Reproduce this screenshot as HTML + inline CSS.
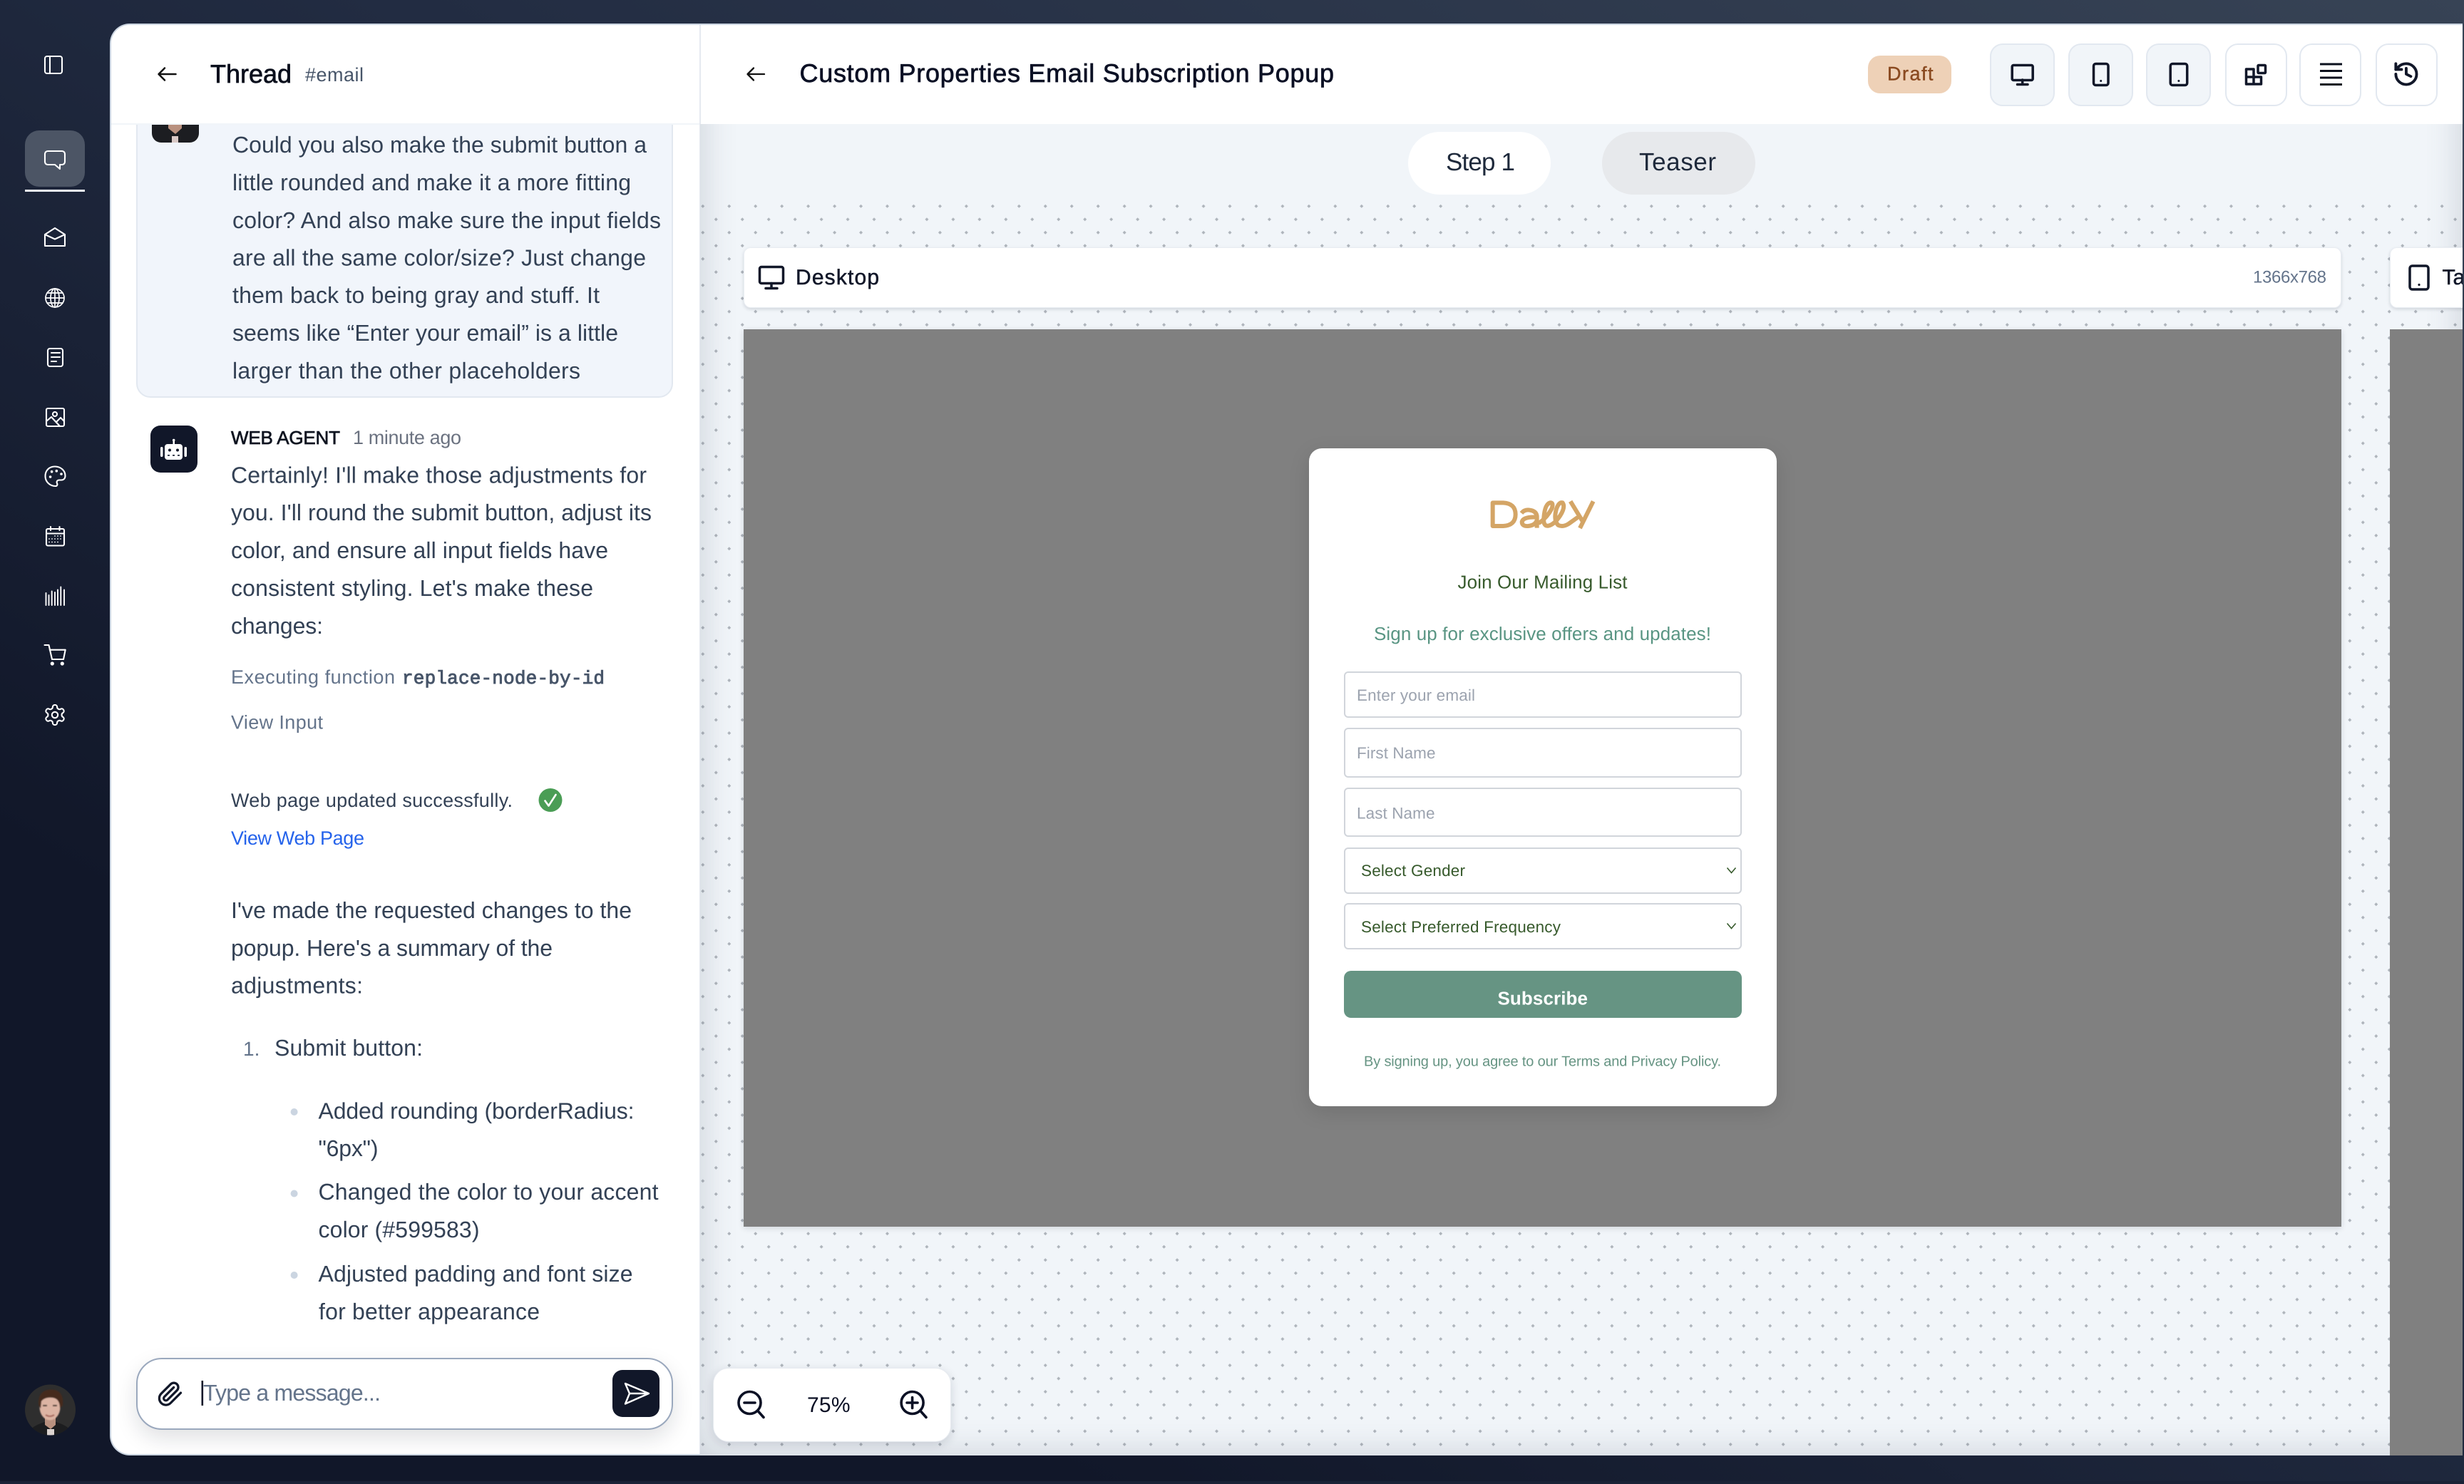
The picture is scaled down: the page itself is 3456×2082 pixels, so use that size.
<!DOCTYPE html>
<html lang="en"><head><meta charset="utf-8"><title>Thread</title>
<style>
html,body{margin:0;padding:0;width:3456px;height:2078px;overflow:hidden;background:#1a2236}
*{box-sizing:border-box}
.a{position:absolute}
#bg{left:0;top:0;width:3456px;height:2078px;background:linear-gradient(to bottom left,#374355 0%,#222c42 42%,#111729 78%,#111729 100%)}
#panel{left:154px;top:33px;width:3300px;height:2009px;background:#fff;border:2px solid #cbd5e1;border-right:0;border-radius:28px 0 0 28px;overflow:hidden}
#clip{left:0;top:0;width:3456px;height:2078px;clip-path:inset(174px 2px 36px 982px)}
svg{position:absolute;left:0;top:0;overflow:visible}
text{font-family:"Liberation Sans",sans-serif;text-rendering:geometricPrecision;white-space:pre}
.b{font-size:32px;fill:#334155}
.s{font-size:27px}
.m{stroke-width:.7px;paint-order:stroke}
.p{font-size:22.5px}
.i{fill:none;stroke:#fff;stroke-width:2.1;stroke-linecap:round;stroke-linejoin:round}
.h{fill:none;stroke:#111729;stroke-width:3.5;stroke-linecap:round;stroke-linejoin:round}
.fi{border:2px solid #d1d5db;border-radius:6px;background:#fff;left:1885px;width:558px}
.hb{top:61px;height:88px;border-radius:18px;border:2.5px solid #e2e8f0}
</style></head><body>
<div class="a" id="bg"></div>
<div class="a" id="panel"></div>

<!-- left panel separators & cards -->
<div class="a" style="left:191px;top:120px;width:753px;height:438px;background:#f1f5fb;border:2px solid #e2e8f0;border-radius:20px"></div>
<div class="a" style="left:156px;top:35px;width:825px;height:140px;background:#fff;border-bottom:2px solid #f1f5f9;border-radius:26px 0 0 0"></div>
<div class="a" style="left:981px;top:35px;width:2px;height:2005px;background:#e5e9f0"></div>
<div class="a" style="left:211px;top:597px;width:66px;height:66px;border-radius:14px;background:#111729"></div>
<div class="a" style="left:191px;top:1905px;width:753px;height:101px;background:#fff;border:2.5px solid #9aa8bd;border-radius:36px;box-shadow:0 12px 30px rgba(15,23,42,.13)"></div>
<div class="a" style="left:859px;top:1922px;width:66px;height:66px;border-radius:14px;background:#111729"></div>
<div class="a" style="left:35px;top:183px;width:84px;height:79px;border-radius:20px;background:#4c5565"></div>
<div class="a" style="left:35px;top:266px;width:84px;height:3px;background:#f1f5f9"></div>

<!-- right canvas -->
<div class="a" id="clip">
  <div class="a" style="left:982px;top:174px;width:2472px;height:1868px;background:#f1f5f9"></div>
  <svg width="3456" height="2078" viewBox="0 0 3456 2078">
    <defs><pattern id="d" x="976.56" y="280.06" width="36.96" height="36.96" patternUnits="userSpaceOnUse">
      <path d="M6.74 9.24L9.24 6.74L11.74 9.24L9.24 11.74ZM25.22 27.72L27.72 25.22L30.22 27.72L27.72 30.22Z" fill="#aeb4bb"/>
    </pattern></defs>
    <rect x="982" y="282" width="2472" height="1760" fill="url(#d)"/>
  </svg>
  <div class="a" style="left:982px;top:54px;width:2472px;height:1988px;box-shadow:inset 0 0 50px rgba(71,85,105,.24)"></div>

  <div class="a" style="left:1975px;top:185px;width:200px;height:88px;border-radius:44px;background:#fff"></div>
  <div class="a" style="left:2247px;top:185px;width:215px;height:88px;border-radius:44px;background:#e7e9ec"></div>

  <div class="a" style="left:1043px;top:347px;width:2241px;height:85px;background:#fff;border:1.5px solid #eaeef3;border-radius:10px;box-shadow:0 2px 5px rgba(15,23,42,.14)"></div>
  <div class="a" style="left:3352px;top:347px;width:400px;height:85px;background:#fff;border:1.5px solid #eaeef3;border-radius:10px;box-shadow:0 2px 5px rgba(15,23,42,.14)"></div>
  <div class="a" style="left:1043px;top:462px;width:2241px;height:1259px;background:#808080;box-shadow:0 2px 8px rgba(15,23,42,.14)"></div>
  <div class="a" style="left:3352px;top:462px;width:400px;height:1620px;background:#808080"></div>

  <div class="a" style="left:1836px;top:629px;width:656px;height:923px;background:#fff;border-radius:18px;box-shadow:0 8px 30px rgba(0,0,0,.12)"></div>
  <div class="a fi" style="top:942px;height:65px"></div>
  <div class="a fi" style="top:1021px;height:70px"></div>
  <div class="a fi" style="top:1105px;height:69px"></div>
  <div class="a fi" style="top:1189px;height:65px"></div>
  <div class="a fi" style="top:1267px;height:65px"></div>
  <div class="a" style="left:1885px;top:1362px;width:558px;height:66px;background:#669483;border-radius:10px"></div>

  <div class="a" style="left:1000px;top:1919px;width:334px;height:104px;background:#fff;border:1.5px solid #e7ebf0;border-radius:22px;box-shadow:0 4px 14px rgba(15,23,42,.14)"></div>
</div>

<!-- header right -->
<div class="a" style="left:2620px;top:78px;width:117px;height:53px;border-radius:17px;background:#eed1b7"></div>
<div class="a hb" style="left:2791px;width:91px;background:#f1f5f9"></div>
<div class="a hb" style="left:2901px;width:91px;background:#f1f5f9"></div>
<div class="a hb" style="left:3010px;width:91px;background:#f1f5f9"></div>
<div class="a hb" style="left:3121px;width:87px;background:#fff"></div>
<div class="a hb" style="left:3225px;width:87px;background:#fff"></div>
<div class="a hb" style="left:3332px;width:87px;background:#fff"></div>

<svg width="3456" height="2078" viewBox="0 0 3456 2078">
<defs>
<clipPath id="av1"><circle cx="70.5" cy="1978" r="35.5"/></clipPath>
<clipPath id="av2"><path d="M213 175H279V187a13 13 0 0 1-13 13H226a13 13 0 0 1-13-13Z"/></clipPath>
<clipPath id="tb"><rect x="3340" y="340" width="114" height="100"/></clipPath>
<filter id="bl"><feGaussianBlur stdDeviation=".7"/></filter>
</defs>

<!-- sidebar icons -->
<g class="i">
<rect x="63" y="79" width="24" height="24" rx="3"/><path d="M70 79V103"/>
<path d="M67 212H87a4 4 0 0 1 4 4V227a4 4 0 0 1-4 4H84V237L77 231H67a4 4 0 0 1-4-4V216a4 4 0 0 1 4-4Z"/>
<path d="M63 345V329L77 320L91 329V345ZM63 329L77 335.5L91 329"/>
<g stroke-width="1.7"><circle cx="77" cy="418" r="13"/><ellipse cx="77" cy="418" rx="6" ry="13"/><path d="M77 405V431M64 418H90M66 411H88M66 425H88"/></g>
<rect x="67" y="489" width="21" height="25" rx="3"/><path d="M72 495H84M72 501H84M72 507H79"/>
<rect x="65" y="573" width="25" height="25" rx="2"/><circle cx="77" cy="581" r="3"/><path d="M65 591L72 585L84 598M79 592L85 586L90 591"/>
<path d="M77 654.5C69 654.5 63.5 660 63.5 668C63.5 676 70 682 78 682C80 682 81 680 80 678C79 676 80 673.5 83 673.5H86C89.5 673.5 91.5 671 91.5 667.5C91.5 660 85 654.5 77 654.5Z"/>
<rect x="65" y="742" width="25" height="23.5" rx="2"/><path d="M71 739V744M83.5 739V744M65 748.5H90"/>
<path d="M64.5 832V849M68.5 835V849M72.7 829.5V849M77 831V849M81 827.5V849M85.3 823.5V849M90 827.5V849" stroke-width="1.9"/>
<path d="M62.5 905H68.5L73 925H89L91.7 911.7H69.7"/>
<g transform="translate(60.2 986.2) scale(1.4)" stroke-width="1.5"><path d="M12.22 2h-.44a2 2 0 0 0-2 2v.18a2 2 0 0 1-1 1.73l-.43.25a2 2 0 0 1-2 0l-.15-.08a2 2 0 0 0-2.73.73l-.22.38a2 2 0 0 0 .73 2.73l.15.1a2 2 0 0 1 1 1.72v.51a2 2 0 0 1-1 1.74l-.15.09a2 2 0 0 0-.73 2.73l.22.38a2 2 0 0 0 2.73.73l.15-.08a2 2 0 0 1 2 0l.43.25a2 2 0 0 1 1 1.73V20a2 2 0 0 0 2 2h.44a2 2 0 0 0 2-2v-.18a2 2 0 0 1 1-1.73l.43-.25a2 2 0 0 1 2 0l.15.08a2 2 0 0 0 2.73-.73l.22-.39a2 2 0 0 0-.73-2.73l-.15-.08a2 2 0 0 1-1-1.74v-.5a2 2 0 0 1 1-1.74l.15-.09a2 2 0 0 0 .73-2.73l-.22-.38a2 2 0 0 0-2.73-.73l-.15.08a2 2 0 0 1-2 0l-.43-.25a2 2 0 0 1-1-1.73V4a2 2 0 0 0-2-2z"/><circle cx="12" cy="12" r="3"/></g>
</g>
<g fill="#fff"><circle cx="70.6" cy="669" r="1.8"/><circle cx="72.6" cy="661.7" r="1.8"/><circle cx="79.3" cy="660.7" r="1.8"/><circle cx="86" cy="665" r="1.8"/>
<circle cx="73.3" cy="931" r="2.6"/><circle cx="87.3" cy="931" r="2.6"/>
<g id="cal"><circle cx="77" cy="752" r=".9"/><circle cx="81" cy="752" r=".9"/><circle cx="85" cy="752" r=".9"/><circle cx="69" cy="756" r=".9"/><circle cx="73" cy="756" r=".9"/><circle cx="77" cy="756" r=".9"/><circle cx="81" cy="756" r=".9"/><circle cx="85" cy="756" r=".9"/><circle cx="69" cy="760.5" r=".9"/><circle cx="73" cy="760.5" r=".9"/><circle cx="77" cy="760.5" r=".9"/><circle cx="81" cy="760.5" r=".9"/></g></g>

<!-- bottom avatar -->
<g clip-path="url(#av1)">
<rect x="30" y="1940" width="82" height="76" fill="#2e2e2e"/>
<path d="M38 2016C40 2002 53 1999 62 1995H79C89 1999 100 2002 103 2016Z" fill="#1c1d1f"/>
<path d="M63 1985H78V1999L71 2005L63 1999Z" fill="#b9917f"/>
<path d="M66 2016V2005H76V2016Z" fill="#dcd4d0"/>
<g filter="url(#bl)">
<ellipse cx="70" cy="1974" rx="14.5" ry="18.5" fill="#dcb4a3"/>
<path d="M54.5 1972C52 1955 62 1949.5 72 1949.5C83 1949.5 90 1957 88 1972L84 1976C84 1966 80 1962 74 1961C67 1960 61 1962 58 1966L57 1976Z" fill="#45291f"/>
<path d="M60 1972H66M74 1972H80" stroke="#2b1d18" stroke-width="2"/>
<path d="M64 1985Q70 1989 76 1985" stroke="#a5665a" stroke-width="2" fill="none"/>
</g>
</g>

<!-- top partial avatar -->
<g clip-path="url(#av2)">
<rect x="213" y="175" width="66" height="25" fill="#1c1d21"/>
<path d="M236 175H255V180L246 188L236 180Z" fill="#b9917f"/>
<path d="M241 200V191H250V200Z" fill="#d9c9c6"/>
</g>

<!-- header left -->
<path d="M246.5 104H223M231 95.5L222.5 104L231 112.5" fill="none" stroke="#111" stroke-width="2.5" stroke-linecap="round" stroke-linejoin="round"/>
<text x="295" y="116" font-size="36" fill="#0a0f1c" class="m" stroke="#0a0f1c" textLength="114">Thread</text>
<text x="428" y="114" class="s" fill="#475569" textLength="82">#email</text>

<!-- user message -->
<text class="b" x="326" y="214" textLength="581">Could you also make the submit button a</text>
<text class="b" x="326" y="267" textLength="559">little rounded and make it a more fitting</text>
<text class="b" x="326" y="320" textLength="601">color? And also make sure the input fields</text>
<text class="b" x="326" y="372.5" textLength="580">are all the same color/size? Just change</text>
<text class="b" x="326" y="425" textLength="515">them back to being gray and stuff. It</text>
<text class="b" x="326" y="478" textLength="541">seems like “Enter your email” is a little</text>
<text class="b" x="326" y="531" textLength="488">larger than the other placeholders</text>

<!-- robot -->
<g fill="#fff"><rect x="231" y="623" width="25" height="22" rx="4"/><rect x="242.5" y="617" width="2.5" height="7"/><circle cx="243.7" cy="617.5" r="1.8"/><rect x="225" y="627" width="3.5" height="14" rx="1.7"/><rect x="258.5" y="627" width="3.5" height="14" rx="1.7"/></g>
<g fill="#111729"><circle cx="238" cy="631.5" r="2"/><circle cx="249" cy="631.5" r="2"/><rect x="235" y="638" width="3" height="1.6"/><rect x="242" y="638" width="3" height="1.6"/><rect x="249" y="638" width="3" height="1.6"/></g>

<text x="324" y="623" font-size="26" class="m" fill="#0f1420" stroke="#0f1420" textLength="153">WEB AGENT</text>
<text x="495" y="623" class="s" fill="#6b7280" textLength="152">1 minute ago</text>

<text class="b" x="324" y="677.5" textLength="583">Certainly! I'll make those adjustments for</text>
<text class="b" x="324" y="730" textLength="590">you. I'll round the submit button, adjust its</text>
<text class="b" x="324" y="783" textLength="529">color, and ensure all input fields have</text>
<text class="b" x="324" y="836" textLength="508">consistent styling. Let's make these</text>
<text class="b" x="324" y="889" textLength="129">changes:</text>

<text x="324" y="959" class="s" fill="#64748b" textLength="230">Executing function</text>
<text x="564" y="959" font-size="26" style="font-family:'Liberation Mono',monospace" fill="#475569" stroke="#475569" stroke-width=".9" textLength="284">replace-node-by-id</text>
<text x="324" y="1022.5" class="s" fill="#64748b" textLength="129">View Input</text>
<text x="324" y="1132" class="s" fill="#334155" textLength="395">Web page updated successfully.</text>
<circle cx="772" cy="1122.5" r="16.5" fill="#4a9d55"/>
<path d="M764.5 1123.5L769.5 1130.5L779.5 1115" fill="none" stroke="#fff" stroke-width="2.6" stroke-linecap="round" stroke-linejoin="round"/>
<text x="324" y="1185" class="s" fill="#2563eb" textLength="187">View Web Page</text>

<text class="b" x="324" y="1288" textLength="562">I've made the requested changes to the</text>
<text class="b" x="324" y="1341" textLength="451">popup. Here's a summary of the</text>
<text class="b" x="324" y="1393.5" textLength="185">adjustments:</text>
<text x="341" y="1481" font-size="28" fill="#64748b">1.</text>
<text class="b" x="385" y="1481" textLength="208">Submit button:</text>
<circle cx="412.6" cy="1560" r="5" fill="#cbd5e1"/>
<text class="b" x="446.5" y="1569.5" textLength="443">Added rounding (borderRadius:</text>
<text class="b" x="446.5" y="1622" textLength="84">"6px")</text>
<circle cx="412.6" cy="1674.5" r="5" fill="#cbd5e1"/>
<text class="b" x="446.5" y="1683" textLength="477">Changed the color to your accent</text>
<text class="b" x="446.5" y="1736" textLength="226">color (#599583)</text>
<circle cx="412.6" cy="1789" r="5" fill="#cbd5e1"/>
<text class="b" x="446.5" y="1798" textLength="441">Adjusted padding and font size</text>
<text class="b" x="447" y="1851" textLength="310">for better appearance</text>

<!-- composer -->
<g transform="translate(220.3 1937) scale(1.55)"><path d="m21.44 11.05-9.19 9.19a6 6 0 0 1-8.49-8.49l8.57-8.57A4 4 0 1 1 18 8.84l-8.59 8.57a2 2 0 0 1-2.83-2.83l8.49-8.48" fill="none" stroke="#111729" stroke-width="2.1" stroke-linecap="round" stroke-linejoin="round"/></g>
<rect x="282.5" y="1937" width="2.6" height="35" fill="#111729"/>
<text x="285" y="1965" font-size="32" fill="#64748b" textLength="249">Type a message...</text>
<path d="M877 1941L910 1955L877 1969.5L883 1955ZM883 1955H910" fill="none" stroke="#fff" stroke-width="2.4" stroke-linejoin="round"/>

<!-- header right -->
<path d="M1072 104H1049M1057 95.5L1048.5 104L1057 112.5" fill="none" stroke="#111" stroke-width="2.3" stroke-linecap="round" stroke-linejoin="round"/>
<text x="1121.5" y="115" font-size="36" fill="#0b1024" class="m" stroke="#0b1024" textLength="749.5">Custom Properties Email Subscription Popup</text>
<text x="2647" y="112.5" font-size="27" fill="#8a4a20" stroke="#8a4a20" stroke-width=".4" textLength="64.5">Draft</text>

<g class="h">
<rect x="2822.2" y="91.5" width="29" height="21" rx="2"/><path d="M2836.7 112V118.5M2829.5 118.5H2844"/>
<rect x="2936.5" y="89.5" width="20.5" height="30" rx="3"/>
<rect x="3044.2" y="89.5" width="23.5" height="30" rx="3"/>
<path d="M3150.5 97H3161V108H3171.5V118H3150.5ZM3161 108V118M3150.5 108H3161"/><rect x="3167" y="91.5" width="10.5" height="11" rx="1"/>
<path d="M3254 90H3285M3254 99.5H3285M3254 109H3285M3254 118.5H3285" stroke="#0a0f1c" stroke-width="3" stroke-linecap="butt"/>
<g transform="translate(3355.5 84.5) scale(1.62)" stroke-width="2.4"><path d="M3 12a9 9 0 1 0 9-9 9.75 9.75 0 0 0-6.74 2.74L3 8"/><path d="M3 3v5h5"/><path d="M12 7v5l4 2"/></g>
</g>
<circle cx="2946.7" cy="113.5" r="1.5" fill="#111729"/><circle cx="3055.9" cy="113.5" r="1.5" fill="#111729"/>

<!-- tabs -->
<text x="2028" y="239" font-size="35" fill="#1e293b" textLength="97">Step 1</text>
<text x="2299" y="239" font-size="35" fill="#1e293b" textLength="108">Teaser</text>

<!-- bar labels -->
<g class="h" stroke-width="3.2"><rect x="1065.5" y="374.5" width="33" height="23" rx="2.5"/><path d="M1082 397.5V404.5M1074 404.5H1090"/></g>
<text x="1116" y="399" font-size="30" fill="#111729" stroke="#111729" stroke-width=".5" textLength="117">Desktop</text>
<text x="3160" y="396.5" font-size="24" fill="#64748b" textLength="103">1366x768</text>
<g clip-path="url(#tb)"><g class="h" stroke-width="3.2"><rect x="3380" y="373" width="26" height="33" rx="3.5"/></g><circle cx="3393" cy="399.5" r="1.6" fill="#111729"/>
<text x="3425.5" y="399" font-size="30" fill="#111729" stroke="#111729" stroke-width=".5">Tablet</text></g>

<!-- popup -->
<g transform="translate(2060 680) scale(.33333)" fill="none" stroke="#d4a566" stroke-width="18" stroke-linejoin="round" stroke-linecap="round">
<path d="M101 76H145Q197 79 197 125Q197 171 145 174H101Z" stroke-linecap="butt"/>
<path d="M222 120Q235 103 258 107Q284 111 287 132V182M287 137Q230 134 224 156Q224 176 250 174Q280 171 287 150" stroke-linecap="butt"/>
<path d="M298 160Q330 138 350 100Q358 74 342 76Q320 82 316 140Q313 176 335 173Q360 168 385 130Q408 94 395 76Q380 72 369 102Q356 150 376 170Q396 180 420 165L455 140"/>
<path d="M428 70L478 152M524 70L468 183" stroke-linecap="butt"/>
</g>
<text x="2044.5" y="825.5" font-size="26" fill="#375a2c" textLength="238">Join Our Mailing List</text>
<text x="1927" y="898" font-size="26" fill="#599583" textLength="473">Sign up for exclusive offers and updates!</text>
<text x="1903" y="983" class="p" fill="#9ca3af" textLength="166">Enter your email</text>
<text x="1903" y="1064" class="p" fill="#9ca3af" textLength="110.5">First Name</text>
<text x="1903" y="1148.5" class="p" fill="#9ca3af" textLength="109.5">Last Name</text>
<text x="1909" y="1229" class="p" fill="#375a2c" textLength="146">Select Gender</text>
<text x="1909" y="1308" class="p" fill="#375a2c" textLength="280">Select Preferred Frequency</text>
<path d="M2422.5 1217.5L2428.5 1224.5L2434.5 1217.5M2422.5 1295.5L2428.5 1302.5L2434.5 1295.5" fill="none" stroke="#375a2c" stroke-width="1.6"/>
<text x="2100.5" y="1409.5" font-size="26" font-weight="700" fill="#fff" textLength="126.5">Subscribe</text>
<text x="1913" y="1495.5" font-size="20" fill="#669483" textLength="501">By signing up, you agree to our Terms and Privacy Policy.</text>

<!-- zoom -->
<g fill="none" stroke="#0b1024" stroke-width="3.6" stroke-linecap="round">
<circle cx="1051.5" cy="1968" r="15.5"/><path d="M1063 1979.5L1071 1988.5M1044 1968H1059"/>
<circle cx="1279.6" cy="1968" r="15.5"/><path d="M1291 1979.5L1299 1988.5M1272 1968H1287M1279.6 1960.5V1975.5"/>
</g>
<text x="1132" y="1981" font-size="30" fill="#0b1024" textLength="60.5">75%</text>
</svg>
</body></html>
